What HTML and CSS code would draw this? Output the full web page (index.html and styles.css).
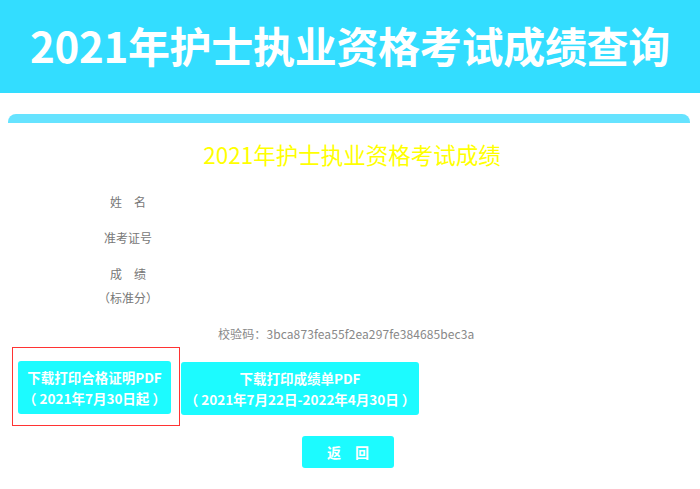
FILE: index.html
```html
<!DOCTYPE html>
<html lang="zh-CN">
<head>
<meta charset="utf-8">
<title>2021年护士执业资格考试成绩查询</title>
<link rel="stylesheet" href="styles.css">
</head>
<body>
<header class="header">
  <h1 class="header-title">2021年护士执业资格考试成绩查询</h1>
</header>
<main class="panel">
  <div class="panel-bar"></div>
  <h2 class="result-title">2021年护士执业资格考试成绩</h2>
  <div class="fields">
    <div class="field">姓　名</div>
    <div class="field">准考证号</div>
    <div class="field field-score">成　绩<span class="sub">（标准分）</span></div>
  </div>
  <div class="check">校验码：3bca873fea55f2ea297fe384685bec3a</div>
  <div class="actions">
    <div class="highlight">
      <a class="btn btn-cert">下载打印合格证明PDF<br>（ 2021年7月30日起 ）</a>
    </div>
    <a class="btn btn-score">下载打印成绩单PDF<br>（ 2021年7月22日-2022年4月30日 ）</a>
  </div>
  <div class="back-row">
    <a class="btn-back">返　回</a>
  </div>
</main>
</body>
</html>
```
FILE: styles.css
```css
html, body {
  margin: 0;
  padding: 0;
  background: #ffffff;
  font-family: "Noto Sans CJK SC", "Noto Sans", sans-serif;
}
.header {
  height: 93px;
  background: #33ddff;
  display: flex;
  align-items: center;
  justify-content: center;
}
.header-title {
  margin: 0;
  color: #ffffff;
  font-size: 42px;
  font-weight: 700;
  line-height: 1;
  letter-spacing: -0.3px;
  position: relative;
  top: -2px;
}
.panel {
  margin: 21px 10px 0 8px;
}
.panel-bar {
  height: 9px;
  background: #66e3ff;
  border-radius: 8px 8px 0 0;
}
.result-title {
  margin: 17px 0 0 0;
  text-align: center;
  color: #ffff00;
  font-size: 22.5px;
  font-weight: 400;
  line-height: 28px;
  position: relative;
  left: 3px;
}
.fields {
  margin: 24px 0 0 0;
  width: 240px;
  display: flex;
  flex-direction: column;
  gap: 16px;
}
.field {
  text-align: center;
  font-size: 12px;
  line-height: 20px;
  color: #777777;
}
.field-score {
  display: flex;
  flex-direction: column;
  gap: 4px;
}
.sub {
  display: block;
}
.check {
  margin: 16px 0 0 210px;
  font-size: 12px;
  line-height: 20px;
  color: #888888;
  letter-spacing: 0.1px;
}
.actions {
  margin-top: 3px;
  display: flex;
  align-items: flex-start;
}
.highlight {
  margin-left: 4px;
  border: 1px solid #ff3333;
  padding: 13px 8px 11px 5px;
}
.btn {
  display: flex;
  align-items: center;
  justify-content: center;
  text-align: center;
  background: #1cfbff;
  color: #ffffff;
  font-size: 13.5px;
  font-weight: 700;
  line-height: 21px;
  border-radius: 3px;
  height: 53px;
  white-space: nowrap;
}
.btn-cert {
  width: 153px;
}
.btn-score {
  margin-top: 15px;
  margin-left: 1px;
  width: 238px;
}
.back-row {
  margin-top: 10px;
  padding-left: 294px;
  display: flex;
}
.btn-back {
  display: flex;
  align-items: center;
  justify-content: center;
  width: 92px;
  height: 32px;
  background: #1cfbff;
  color: #ffffff;
  font-size: 14px;
  font-weight: 700;
  border-radius: 3px;
}
```
